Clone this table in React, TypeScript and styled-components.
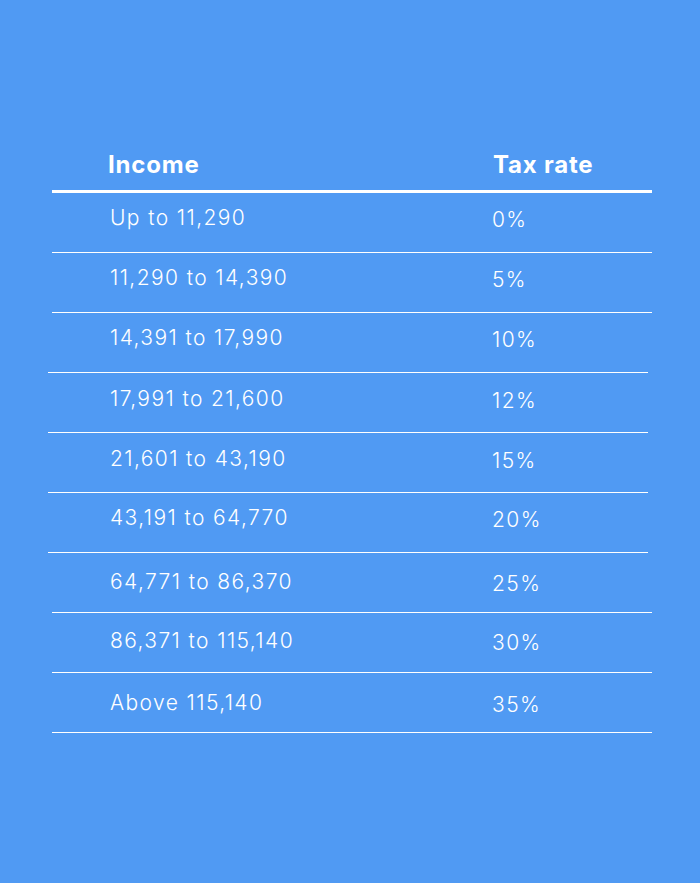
import React from "react";
import styled, { createGlobalStyle } from "styled-components";

const Global = createGlobalStyle`
  html, body { margin: 0; padding: 0; }
  body { background: #509af3; font-family: Inter, "Noto Sans", sans-serif; }
`;

const Page = styled.div`
  width: 700px;
  height: 883px;
  box-sizing: border-box;
  padding: 140px 0 0 52px;
  background: #509af3;
  color: #ffffff;
`;

const Table = styled.div`
  width: 600px;
  display: flex;
  flex-direction: column;
`;

const HeaderRow = styled.div`
  height: 53px;
  box-sizing: border-box;
  display: flex;
  align-items: center;
  padding-bottom: 1px;
  border-bottom: 3px solid #ffffff;
  font-weight: 700;
  font-size: 24px;
  letter-spacing: 0.8px;
`;

const Row = styled.div<{ $shift: number; $dy: number }>`
  height: 60px;
  box-sizing: border-box;
  display: flex;
  align-items: center;
  padding-bottom: ${(p) => 10 - p.$dy}px;
  border-bottom: 1px solid #ffffff;
  margin-left: ${(p) => p.$shift}px;
  margin-right: ${(p) => -p.$shift}px;
  font-weight: 300;
  font-size: 21px;
  letter-spacing: 1.4px;
`;

const IncomeCell = styled.div<{ $head?: boolean; $shift?: number }>`
  width: ${(p) => (p.$head ? 441 : 441 - (p.$shift || 0))}px;
  padding-left: ${(p) => (p.$head ? 56 : 58 - (p.$shift || 0))}px;
  box-sizing: border-box;
`;

const RateCell = styled.div<{ $head?: boolean }>`
  ${(p) => (p.$head ? "" : "position: relative; top: 2px; left: -1px;")}
`;

const rows: [string, string, number, number][] = [
  ["Up to 11,290", "0%", 0, 0],
  ["11,290 to 14,390", "5%", 0, 0],
  ["14,391 to 17,990", "10%", -4, -1],
  ["17,991 to 21,600", "12%", -4, 1],
  ["21,601 to 43,190", "15%", -4, 1],
  ["43,191 to 64,770", "20%", -4, 0],
  ["64,771 to 86,370", "25%", 0, 7],
  ["86,371 to 115,140", "30%", 0, 6],
  ["Above 115,140", "35%", 0, 9],
];

export default function App() {
  return (
    <>
      <Global />
      <Page>
        <Table>
          <HeaderRow>
            <IncomeCell $head>Income</IncomeCell>
            <RateCell $head>Tax rate</RateCell>
          </HeaderRow>
          {rows.map(([inc, rate, shift, dy]) => (
            <Row key={inc} $shift={shift} $dy={dy}>
              <IncomeCell $shift={shift}>{inc}</IncomeCell>
              <RateCell>{rate}</RateCell>
            </Row>
          ))}
        </Table>
      </Page>
    </>
  );
}
